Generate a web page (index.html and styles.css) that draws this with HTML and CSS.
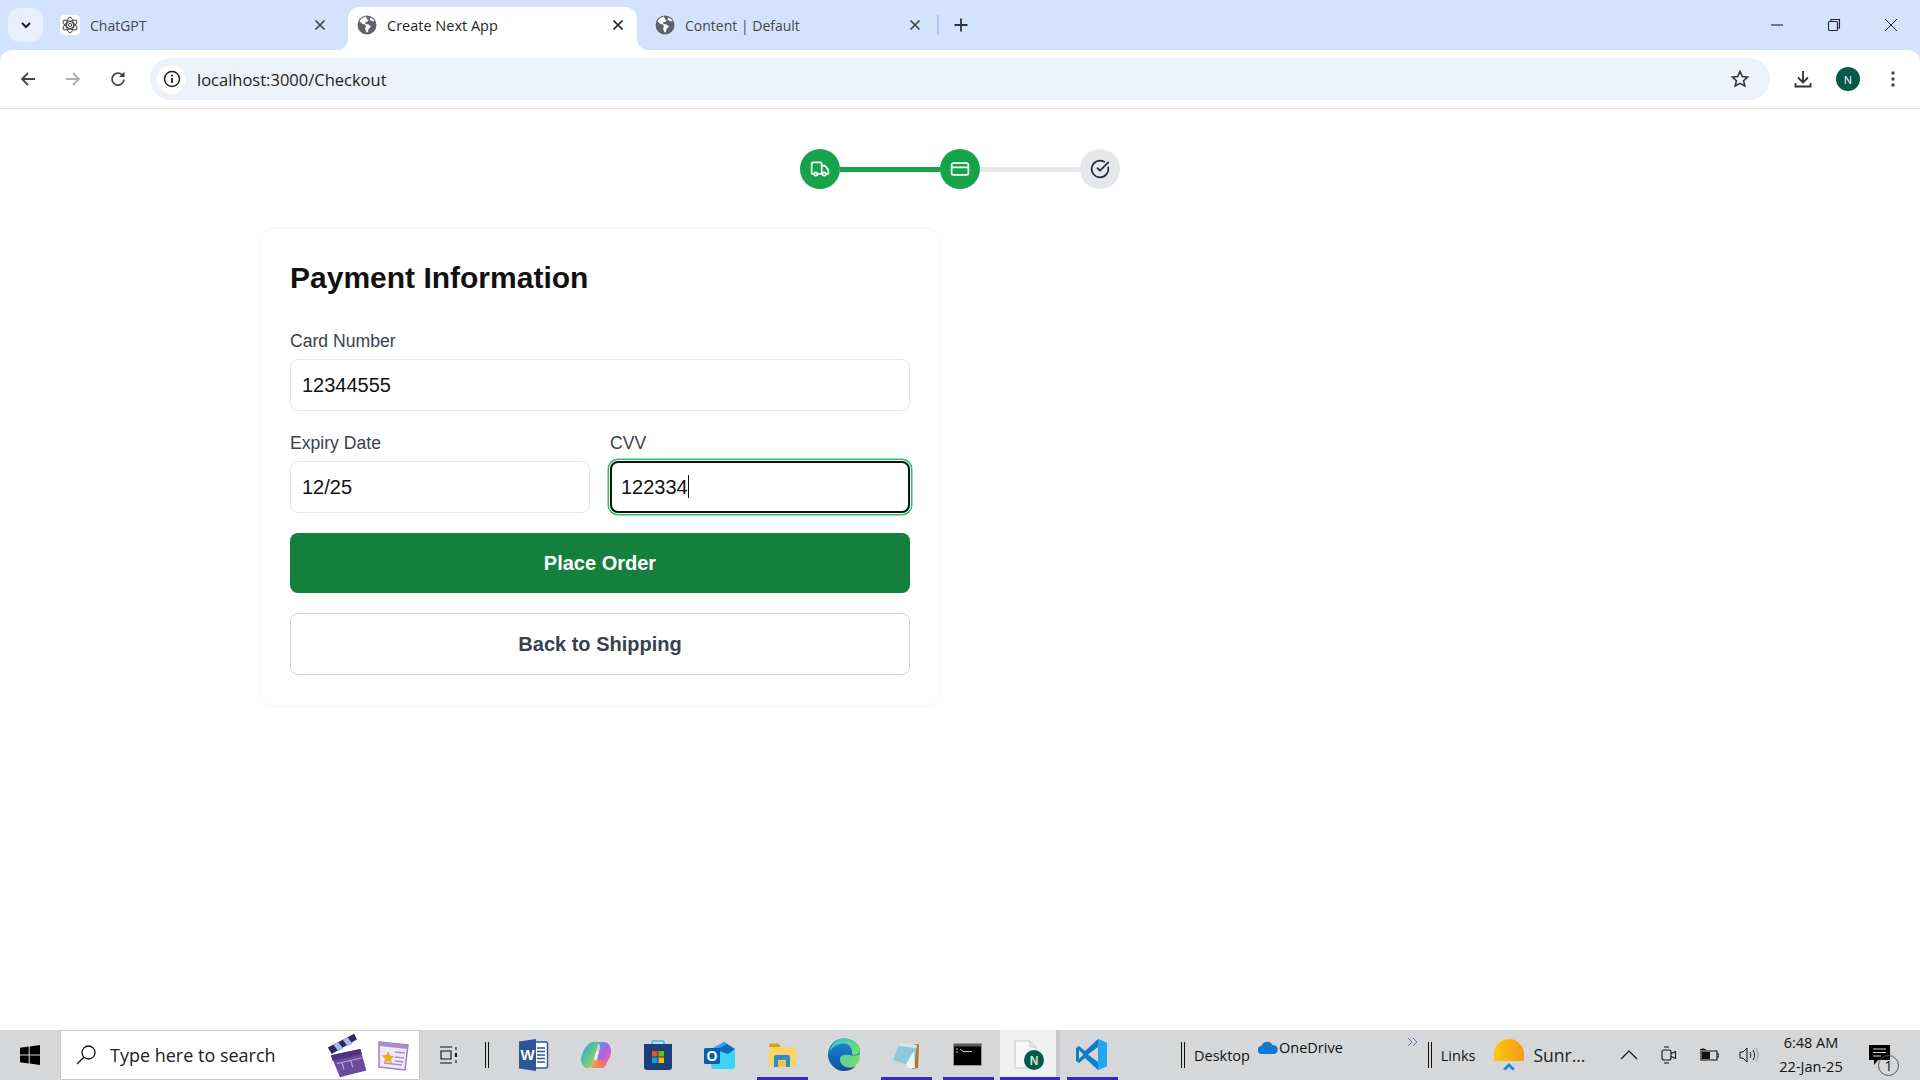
FILE: index.html
```html
<!DOCTYPE html>
<html lang="en">
<head>
<meta charset="utf-8">
<title>Create Next App</title>
<link rel="stylesheet" href="styles.css">
</head>
<body>
<div class="screen">
  <header class="browser">
    <div class="tabstrip">
      <button class="tab-search"><svg width="14" height="14" viewBox="0 0 14 14"><path d="M3 5l4 4 4-4" fill="none" stroke="#1f1f1f" stroke-width="2"/></svg></button>
      <div class="tab tab-first">
        <span class="favicon favicon-gpt"><svg width="18" height="18" viewBox="0 0 18 18" fill="none" stroke="#444" stroke-width="1"><ellipse cx="9" cy="9" rx="3.4" ry="7.8"/><ellipse cx="9" cy="9" rx="3.4" ry="7.8" transform="rotate(60 9 9)"/><ellipse cx="9" cy="9" rx="3.4" ry="7.8" transform="rotate(120 9 9)"/><circle cx="9" cy="9" r="1.6"/></svg></span>
        <span class="tab-title">ChatGPT</span>
        <svg class="tab-close" width="16" height="16" viewBox="0 0 16 16"><path d="M3.5 3.5l9 9M12.5 3.5l-9 9" stroke="#444" stroke-width="1.7"/></svg>
      </div>
      <div class="tab tab-active">
        <svg class="globe" width="20" height="20" viewBox="0 0 20 20"><circle cx="10" cy="10" r="9.5" fill="#5f6368"/><path d="M9 1.5C6 2 3.5 4 2.5 6.5l3 2.5 2.5.5 1 2-1 2 1.5 4 1.5-.5.5-3 2.5-2.5-2.5-2-3-.5-.5-1.5 2-.5 1.5-1.5-1.5-1.500zM13.500 2.500l-1 2 2 1.500 3 .5c-.7-1.800-2.200-3.200-4-4z" fill="#fff"/></svg>
        <span class="tab-title tab-title-active">Create Next App</span>
        <svg class="tab-close" width="16" height="16" viewBox="0 0 16 16"><path d="M3.5 3.5l9 9M12.5 3.5l-9 9" stroke="#1f1f1f" stroke-width="1.7"/></svg>
      </div>
      <div class="tab tab-last">
        <svg class="globe" width="20" height="20" viewBox="0 0 20 20"><circle cx="10" cy="10" r="9.5" fill="#5f6368"/><path d="M9 1.5C6 2 3.5 4 2.5 6.5l3 2.5 2.5.5 1 2-1 2 1.5 4 1.5-.5.5-3 2.5-2.5-2.5-2-3-.5-.5-1.5 2-.5 1.5-1.5-1.5-1.500zM13.500 2.500l-1 2 2 1.500 3 .5c-.7-1.800-2.200-3.200-4-4z" fill="#fff"/></svg>
        <span class="tab-title">Content | Default</span>
        <svg class="tab-close" width="16" height="16" viewBox="0 0 16 16"><path d="M3.5 3.5l9 9M12.5 3.5l-9 9" stroke="#444" stroke-width="1.7"/></svg>
      </div>
      <span class="tab-sep"></span>
      <svg class="tab-new" width="16" height="16" viewBox="0 0 16 16"><path d="M8 1.5v13M1.5 8h13" stroke="#333" stroke-width="1.8"/></svg>
      <div class="window-controls">
        <svg width="14" height="14" viewBox="0 0 14 14"><path d="M1 7h12" stroke="#222" stroke-width="1.1"/></svg>
        <svg width="14" height="14" viewBox="0 0 14 14" fill="none" stroke="#222" stroke-width="1.1"><rect x="1.5" y="3.5" width="9" height="9" rx="1"/><path d="M4 3V1.500h8.500V10H11"/></svg>
        <svg width="14" height="14" viewBox="0 0 14 14"><path d="M1 1l12 12M13 1L1 13" stroke="#222" stroke-width="1"/></svg>
      </div>
    </div>
    <div class="toolbar">
      <svg class="nav-icon" width="18" height="18" viewBox="0 0 18 18" fill="none" stroke="#444" stroke-width="1.8"><path d="M16 9H3M9 3L3 9l6 6"/></svg>
      <svg class="nav-icon" width="18" height="18" viewBox="0 0 18 18" fill="none" stroke="#b0b0b0" stroke-width="1.8"><path d="M2 9h13M9 3l6 6-6 6"/></svg>
      <svg class="nav-icon" width="18" height="18" viewBox="0 0 18 18" fill="none" stroke="#444" stroke-width="1.8"><path d="M15 9.500A6 6 0 1 1 13.200 4.800L15 6.500"/><path d="M15.500 1.500V7H10" fill="#444" stroke="none"/></svg>
      <div class="omnibox">
        <span class="site-info"><svg width="18" height="18" viewBox="0 0 18 18" fill="none"><circle cx="9" cy="9" r="7.5" stroke="#222" stroke-width="1.5"/><path d="M9 8v5" stroke="#222" stroke-width="1.8"/><circle cx="9" cy="5.5" r="1.1" fill="#222"/></svg></span>
        <span class="url">localhost:3000/Checkout</span>
        <svg class="star" width="20" height="20" viewBox="0 0 20 20" fill="none" stroke="#333" stroke-width="1.6"><path d="M10 2.500l2.300 5 5.300.6-4 3.600 1.200 5.300L10 14.300 5.200 17l1.200-5.300-4-3.600 5.300-.6z"/></svg>
      </div>
      <svg class="download" width="20" height="20" viewBox="0 0 20 20" fill="none" stroke="#333" stroke-width="1.8"><path d="M10 2v11M5 8.500l5 5 5-5M2.500 14v3.500h15V14"/></svg>
      <span class="avatar">N</span>
      <svg class="kebab" width="16" height="20" viewBox="0 0 16 20" fill="#444"><circle cx="8" cy="4" r="1.7"/><circle cx="8" cy="10" r="1.7"/><circle cx="8" cy="16" r="1.7"/></svg>
    </div>
  </header>

  <main class="page">
    <div class="container">
      <div class="stepper">
        <span class="step step-done"><svg width="20" height="20" viewBox="0 0 24 24" fill="none" stroke="currentColor" stroke-width="2" stroke-linecap="round" stroke-linejoin="round"><path d="M14 18V6a2 2 0 0 0-2-2H4a2 2 0 0 0-2 2v11a1 1 0 0 0 1 1h2"/><path d="M15 18H9"/><path d="M19 18h2a1 1 0 0 0 1-1v-3.650a1 1 0 0 0-.22-.624l-3.480-4.350A1 1 0 0 0 17.520 8H14"/><circle cx="17" cy="18" r="2"/><circle cx="7" cy="18" r="2"/></svg></span>
        <span class="step-line step-line-done"></span>
        <span class="step step-done"><svg width="20" height="20" viewBox="0 0 24 24" fill="none" stroke="currentColor" stroke-width="2" stroke-linecap="round" stroke-linejoin="round"><rect width="20" height="14" x="2" y="5" rx="2"/><line x1="2" x2="22" y1="10" y2="10"/></svg></span>
        <span class="step-line"></span>
        <span class="step"><svg width="20" height="20" viewBox="0 0 24 24" fill="none" stroke="currentColor" stroke-width="2" stroke-linecap="round" stroke-linejoin="round"><path d="M21.801 10A10 10 0 1 1 17 3.335"/><path d="m9 11 3 3L22 4"/></svg></span>
      </div>

      <section class="card">
        <h2 class="card-title">Payment Information</h2>
        <div class="field">
          <label class="label">Card Number</label>
          <div class="input">12344555</div>
        </div>
        <div class="field-row">
          <div class="field">
            <label class="label">Expiry Date</label>
            <div class="input">12/25</div>
          </div>
          <div class="field">
            <label class="label">CVV</label>
            <div class="input input-focus">122334<span class="caret"></span></div>
          </div>
        </div>
        <button class="btn btn-primary">Place Order</button>
        <button class="btn btn-outline">Back to Shipping</button>
      </section>
    </div>
  </main>

  <footer class="taskbar">
    <div class="start"><svg width="20" height="20" viewBox="0 0 20 20" fill="#000"><path d="M0 2.800l8.700-1.200v7.900H0zM9.700 1.400L20 0v9.500H9.700zM0 10.500h8.700v7.900L0 17.200zM9.700 10.500H20V20L9.700 18.600z"/></svg></div>
    <div class="search">
      <svg width="22" height="22" viewBox="0 0 22 22" fill="none" stroke="#111" stroke-width="1.3"><circle cx="13.500" cy="8.500" r="6.500"/><path d="M8.800 13.200L2 20"/></svg>
      <span class="search-text">Type here to search</span>
      <span class="search-deco">
        <svg class="clapper" width="38" height="42" viewBox="0 0 38 42"><g transform="rotate(-8 19 21)"><path d="M3 19l30-2 3 22-27 3z" fill="#6a4b9e"/><path d="M3 19l30-2 1 5-30 3z" fill="#4f3380"/><path d="M8 28l25-2M13 28l1 7M22 27l1 7" stroke="#b9a6d8" stroke-width="1.2" fill="none"/><path d="M1 11L29 1l2 6L4 18z" fill="#2e2a5a"/><path d="M7 9l5-2 4 7-5 2zM17 5.500l5-2 4 7-5 2z" fill="#a9b8ee"/></g></svg>
        <svg width="34" height="32" viewBox="0 0 34 32"><path d="M3 3l29 3-3 25-26-3z" fill="#efe8f8" stroke="#9b83c6" stroke-width="1.5"/><path d="M3 3l29 3-.5 4L3 7z" fill="#a68fd0"/><path d="M19 13l10 1M19 18l9 1M19 22l8 1M8 24l18 2" stroke="#a68fd0" stroke-width="1.4"/><path d="M12 12l2 4.500 4.500.5-3.500 3 1 4.500-4-2.500-4 2 1-4.500-3-3 4.500-.5z" fill="#f4a81e"/></svg>
      </span>
    </div>
    <div class="task-view"><svg width="20" height="20" viewBox="0 0 20 20" fill="none" stroke="#111" stroke-width="1.1"><path d="M1 2h12M1 18h12M2 6h10v8H2z"/><path d="M17 2v3M17 15v3" /><path d="M17 8v4" stroke-width="2"/></svg></div>
    <span class="dbl-sep"></span>
    <div class="apps">
      <div class="app"><svg width="30" height="32" viewBox="0 0 30 32"><path d="M9 3h18a1.500 1.500 0 0 1 1.500 1.500v23A1.500 1.500 0 0 1 27 29H9z" fill="#fff" stroke="#2b579a" stroke-width="1.5"/><path d="M18 9h8M18 12.500h8M18 16h8M18 19.500h8M18 23h8" stroke="#2b579a" stroke-width="1.5"/><path d="M0 2.500L17 0v32L0 29.500z" fill="#2b579a"/><text x="8.5" y="20.5" class="icon-text icon-text-w">W</text></svg></div>
      <div class="app"><svg width="30" height="28" viewBox="0 0 30 28"><defs><linearGradient id="cp1" x1="0" y1="0" x2="1" y2="1"><stop offset="0" stop-color="#2b9fe8"/><stop offset=".5" stop-color="#5fc88a"/><stop offset="1" stop-color="#f2c53c"/></linearGradient><linearGradient id="cp2" x1="0" y1="0" x2="1" y2="1"><stop offset="0" stop-color="#3bb4ee"/><stop offset=".5" stop-color="#b05fdc"/><stop offset="1" stop-color="#ef6aa5"/></linearGradient><linearGradient id="cp3" x1="0" y1="0" x2="1" y2="0"><stop offset="0" stop-color="#f2a93c"/><stop offset="1" stop-color="#ee5f7f"/></linearGradient></defs><path d="M11 1h7L13 17l-2 7c-1 2-2 3-5 3C2 27 0 22 0 18 1 11 5 3 11 1z" fill="url(#cp1)"/><path d="M17 1h6c4 0 7 4 7 9 0 6-3 12-8 13l-7-1 2-8 2-7c0-3-1-5-2-6z" fill="url(#cp2)"/><path d="M9 27h11c3 0 5-2 6-6l-3-1-10-2-2 6c0 1-1 3-2 3z" fill="url(#cp3)"/><path d="M15 11l3-1-2 9-3 1z" fill="#fff" opacity=".7"/></svg></div>
      <div class="app"><svg width="30" height="30" viewBox="0 0 30 30"><path d="M9 5V2a1 1 0 0 1 1-1h10a1 1 0 0 1 1 1v3" fill="none" stroke="#35c0ee" stroke-width="1.6"/><path d="M1 4h28v23a3 3 0 0 1-3 3H4a3 3 0 0 1-3-3z" fill="#1b3f78"/><rect x="9" y="11" width="5.5" height="5.5" fill="#f25022"/><rect x="15.5" y="11" width="5.5" height="5.5" fill="#7fba00"/><rect x="9" y="17.5" width="5.5" height="5.5" fill="#00a4ef"/><rect x="15.5" y="17.5" width="5.5" height="5.5" fill="#ffb900"/></svg></div>
      <div class="app"><svg width="31" height="28" viewBox="0 0 31 28"><path d="M7 8l13-7 11 7v17a3 3 0 0 1-3 3H10a3 3 0 0 1-3-3z" fill="#3dd3f5"/><path d="M10 8l10-7 11 7-7 5z" fill="#0f6cbd"/><path d="M7 8l13-7 3 2-13 7z" fill="#28a8ea"/><rect x="0" y="7" width="16" height="16" rx="1.5" fill="#0a5db5"/><text x="8" y="20" class="icon-text icon-text-o">O</text></svg></div>
      <div class="app"><svg width="28" height="24" viewBox="0 0 28 24"><path d="M1 2a1.500 1.500 0 0 1 1.500-1.500h8L13 4v3H1z" fill="#d99e1c"/><path d="M1 4h26a1 1 0 0 1 1 1v17.500a1 1 0 0 1-1 1H2a1 1 0 0 1-1-1z" fill="#fbd467"/><path d="M6 24V14a2 2 0 0 1 2-2h12a2 2 0 0 1 2 2v10h-4v-7H10v7z" fill="#2c8dc9"/><rect x="10" y="18" width="8" height="6" fill="#fbc33b"/></svg></div>
      <div class="app"><svg width="32" height="33" viewBox="0 0 32 33"><defs><linearGradient id="edg" x1="0" y1="0" x2="1" y2="1"><stop offset="0" stop-color="#38c6d9"/><stop offset="1" stop-color="#7adf58"/></linearGradient><linearGradient id="edb" x1="0" y1="0" x2="0" y2="1"><stop offset="0" stop-color="#1a8ed6"/><stop offset="1" stop-color="#0f4f9e"/></linearGradient></defs><circle cx="16" cy="16.500" r="16" fill="url(#edg)"/><path d="M16 .5C7 .5 0 8 0 17c0 8 7 16 16 16 5 0 9-2 12-5-5 3-16 2-16-7 0-4 5-5 9-4 5 1 11 1 11-3C32 6 25 .5 16 .5z" fill="url(#edb)"/><path d="M16 .5c8 0 15 5 16 12 0 3-3 5-8 4 1-6-3-11-8-11-6 0-12 3-15 9C3 7 9 .5 16 .5z" fill="url(#edg)"/></svg></div>
      <div class="app"><svg width="28" height="28" viewBox="0 0 28 28"><path d="M27 3l-1 24-6 1 2-25z" fill="#a9783a"/><path d="M8 2l17 2-3 22L1 19z" fill="#8ec8dc"/><path d="M8 2l17 2-.5 3L7 5z" fill="#dfe6e8"/><path d="M14 23l8-13 1 17-7 0z" fill="#eef3f5"/></svg></div>
      <div class="app"><svg width="29" height="23" viewBox="0 0 29 23"><rect x=".5" y=".5" width="28" height="22" rx="1" fill="#000" stroke="#9a9a9a"/><rect x="1" y="1" width="27" height="2.5" fill="#5a5a5a"/><path d="M3 6h2M3 9h2M7 6l3 2.500H19" stroke="#ccc" stroke-width="1" fill="none"/></svg></div>
      <div class="app app-active"><svg width="30" height="30" viewBox="0 0 30 30"><path d="M1 1h15l6 6v21H1z" fill="#f7f7f7" stroke="#c9c9c9"/><path d="M16 1v6h6" fill="#e4e4e4" stroke="#c9c9c9"/><circle cx="20" cy="20" r="10" fill="#03594a"/><text x="20" y="24.5" class="icon-text icon-text-n">N</text></svg></div>
      <div class="app"><svg width="31" height="31" viewBox="0 0 31 31"><path d="M22 0l9 4v23l-9 4L9 19l-6 5-3-2V9l3-2 6 5z" fill="#0f7cc8"/><path d="M22 0l9 4v23l-9 4z" fill="#23a6f0"/><path d="M22 8v15l-10-7.500z" fill="#d5d7d9"/><path d="M3 11v9l4.500-4.500z" fill="#d5d7d9"/></svg></div>
    </div>
    <span class="dbl-sep dbl-sep-desktop"></span>
    <span class="tb-text tb-desktop">Desktop</span>
    <svg class="onedrive" width="20" height="14" viewBox="0 0 20 14"><path d="M4 13a4 4 0 0 1-.5-8A6 6 0 0 1 14.500 4 4.500 4.500 0 0 1 16 13z" fill="#0f78d4"/></svg>
    <span class="tb-text tb-onedrive">OneDrive</span>
    <svg class="chevrons" width="11" height="10" viewBox="0 0 11 10" fill="none" stroke="#6a6fa8" stroke-width="1"><path d="M1 1l4 4-4 4M6 1l4 4-4 4"/></svg>
    <span class="dbl-sep dbl-sep-links"></span>
    <span class="tb-text tb-links">Links</span>
    <svg class="sunrise" width="30" height="32" viewBox="0 0 30 32"><defs><linearGradient id="sun" x1="0" y1="0" x2="1" y2="0"><stop offset="0" stop-color="#fbc80e"/><stop offset="1" stop-color="#f79a16"/></linearGradient></defs><path d="M0 22V15a15 15 0 0 1 30 0v7z" fill="url(#sun)"/><path d="M9 30l6-6 6 6-2.500 1.500L15 28l-3.500 3.500z" fill="#1a8ad8"/></svg>
    <span class="tb-text tb-weather">Sunr...</span>
    <div class="tray">
      <span class="tray-cell"><svg width="18" height="10" viewBox="0 0 18 10" fill="none" stroke="#111" stroke-width="1.2"><path d="M1 9l8-8 8 8"/></svg></span>
      <span class="tray-cell"><svg width="16" height="20" viewBox="0 0 16 20" fill="none" stroke="#111" stroke-width="1.1"><rect x="1" y="5" width="9" height="10" rx="2"/><path d="M10 8.500l4.500-2v7l-4.500-2M3 2h5M3 18h5"/></svg></span>
      <span class="tray-cell"><svg width="20" height="14" viewBox="0 0 20 14"><path d="M2 3h16v9H2zM18 6h2v3h-2zM4 0v2M1 1.500h6" fill="none" stroke="#111" stroke-width="1.1"/><rect x="3" y="4" width="8" height="7" fill="#111"/></svg></span>
      <span class="tray-cell"><svg width="20" height="18" viewBox="0 0 20 18" fill="none" stroke="#111" stroke-width="1"><path d="M1 6h3l4-4v14l-4-4H1z"/><path d="M11 6c1 2 1 4 0 6M14 4c2 3 2 7 0 10"/><path d="M17 2c2.500 4 2.500 10 0 14" stroke="#999"/></svg></span>
    </div>
    <div class="clock"><span>6:48 AM</span><span>22-Jan-25</span></div>
    <div class="notify">
      <svg width="21" height="20" viewBox="0 0 21 20"><path d="M0 0h21v15H9l-4 5v-5H0z" fill="#000"/><path d="M4 4h13M4 7.500h13M4 11h8" stroke="#d5d7d9" stroke-width="1.2"/></svg>
      <span class="notify-count">1</span>
    </div>
  </footer>
</div>
</body>
</html>
```
FILE: styles.css
```css
* { box-sizing: border-box; }
html, body { margin: 0; height: 100%; background: #fff; }
body { font-family: "Liberation Sans", Arial, sans-serif; overflow: hidden; }
svg { display: block; flex: none; }
button { font: inherit; border: 0; padding: 0; }

.screen { width: 1920px; height: 1080px; display: flex; flex-direction: column; }

/* browser chrome */
.browser { height: 109px; flex: none; background: #d3e3fd; font-family: "Open Sans", sans-serif; }
.tabstrip { height: 50px; display: flex; align-items: flex-end; }
.tab-search { width: 35px; height: 34px; margin: 0 5px 8px 8px; border-radius: 12px; background: #e9f0fd; display: flex; align-items: center; justify-content: center; }
.tab { height: 43px; display: flex; align-items: center; position: relative; }
.tab-first { width: 298px; padding: 0 18px 7px 12px; }
.tab-active { width: 289px; margin: 0 7px 0 2px; padding: 0 11px 7px 9px; background: #fff; border-radius: 12px 12px 0 0; }
.tab-active::before, .tab-active::after { content: ""; position: absolute; bottom: 0; width: 12px; height: 12px; }
.tab-active::before { left: -12px; background: radial-gradient(circle at 0 0, transparent 12px, #fff 12.5px); }
.tab-active::after { right: -12px; background: radial-gradient(circle at 100% 0, transparent 12px, #fff 12.5px); }
.tab-last { width: 298px; padding: 0 19px 7px 11px; }
.favicon-gpt { width: 20px; height: 20px; background: #fff; border-radius: 4px; display: flex; align-items: center; justify-content: center; }
.tab-title { flex: 1; margin-left: 10px; font-size: 14px; color: #474747; white-space: nowrap; }
.tab-title-active { color: #1f1f1f; font-size: 14.5px; }
.tab-sep { width: 2px; height: 20px; background: #a8c7fa; margin: 0 0 15px -5px; }
.tab-new { margin: 0 0 17px 14px; }
.window-controls { margin-left: auto; display: flex; gap: 43px; padding: 0 22px 18px 0; }

.toolbar { height: 59px; background: #fff; border-radius: 12px 12px 0 0; border-bottom: 1px solid #e3e2dc; display: flex; align-items: center; padding: 0 18px 0 19px; }
.nav-icon { margin-right: 27px; }
.nav-icon:nth-child(3) { margin-right: 0; }
.omnibox { width: 1620px; height: 42px; margin-left: 23px; border-radius: 21px; background: #ecf1fa; display: flex; align-items: center; padding: 0 20px 0 7px; }
.site-info { width: 29px; height: 29px; border-radius: 50%; background: #fff; display: flex; align-items: center; justify-content: center; }
.url { flex: 1; margin-left: 11px; font-size: 16.5px; color: #1f1f1f; }
.download { margin-left: 23px; }
.avatar { width: 24px; height: 24px; margin-left: 23px; border-radius: 50%; background: #03594a; color: #fff; font-size: 11px; display: flex; align-items: center; justify-content: center; }
.kebab { margin-left: 25px; }

/* page */
.page { flex: 1; }
.container { width: 1400px; margin: 0 auto; padding-top: 40px; }
.stepper { display: flex; align-items: center; justify-content: center; margin-bottom: 39px; }
.step { width: 40px; height: 40px; border-radius: 50%; background: #e5e7eb; color: #1f2937; display: flex; align-items: center; justify-content: center; }
.step-done { background: #16a34a; color: #fff; }
.step-line { width: 100px; height: 5px; background: #e5e7eb; }
.step-line-done { background: #16a34a; }

.card { width: 680px; padding: 31px 29px 30px; border: 1px solid #f7f7f8; border-radius: 12px; background: #fff; box-shadow: 0 1px 2px rgba(0, 0, 0, .02); }
.card-title { margin: 0 0 33px; font-size: 30px; line-height: 36px; font-weight: 700; color: #111; }
.field { display: block; margin-bottom: 20px; }
.field-row { display: grid; grid-template-columns: 1fr 1fr; gap: 20px; }
.label { display: block; margin-bottom: 6px; font-size: 17.6px; line-height: 24px; color: #374151; }
.input { height: 52px; padding: 0 11px; border: 1px solid #e5e7eb; border-radius: 8px; font-size: 20px; line-height: 50px; color: #111; background: #fff; }
.input-focus { border: 2px solid #111; padding: 0 9px; line-height: 48px; box-shadow: 0 0 0 1px #fff, 0 0 0 2.5px #22c55e; }
.caret { display: inline-block; width: 1px; height: 23px; background: #111; vertical-align: -4px; }
.btn { display: block; width: 100%; border-radius: 8px; font-size: 20px; font-weight: 700; text-align: center; }
.btn-primary { height: 60px; background: #15803d; color: #fff; margin-bottom: 20px; }
.btn-outline { height: 62px; background: #fff; color: #374151; border: 1px solid #d1d5db; }

/* taskbar */
.taskbar { height: 50px; flex: none; background: #d5d7d9; display: flex; align-items: center; font-family: "Open Sans", sans-serif; color: #111; }
.start { width: 60px; display: flex; justify-content: center; }
.search { width: 360px; height: 50px; background: #fff; border: 1px solid #c9cbcd; display: flex; align-items: center; padding: 0 9px 0 14px; }
.search-text { flex: 1; margin-left: 13px; font-size: 18px; color: #222; }
.search-deco { display: flex; align-items: center; gap: 10px; }
.clapper { overflow: visible; }
.task-view { width: 58px; display: flex; justify-content: center; }
.dbl-sep { width: 4px; height: 26px; border-left: 1px solid #111; border-right: 1px solid #111; margin-left: 7px; flex: none; }
.apps { display: flex; gap: 11px; margin-left: 20px; height: 50px; }
.app { width: 51px; height: 50px; border-bottom: 3px solid #3b22cf; display: flex; align-items: center; justify-content: center; padding: 2px 2px 0 0; }
.app:nth-child(-n+4), .app:nth-child(6) { border-bottom-color: transparent; }
.app-active { width: 60px; margin: 0 -4px 0 -5px; background: #f0f0f0; box-shadow: inset -4px 0 0 #c9c9cc; }
.icon-text { font-family: "Liberation Sans", sans-serif; font-weight: 700; text-anchor: middle; fill: #fff; }
.icon-text-w { font-size: 15px; }
.icon-text-o { font-size: 14px; }
.icon-text-n { font-size: 12px; fill: #cfe3dc; }
.dbl-sep-desktop { margin-left: 63px; }
.tb-text { font-size: 14.5px; white-space: nowrap; }
.tb-desktop { margin-left: 9px; }
.onedrive { margin: -15px 0 0 8px; }
.tb-onedrive { margin: -15px 0 0 1px; }
.chevrons { margin: -26px 0 0 64px; }
.dbl-sep-links { margin-left: 10px; }
.tb-links { margin-left: 9px; }
.sunrise { margin: 0 0 0 19px; }
.tb-weather { margin-left: 9px; font-size: 17.5px; color: #222; }
.tray { display: flex; align-items: center; margin-left: auto; }
.tray-cell { width: 40px; display: flex; justify-content: center; }
.clock { width: 84px; display: flex; flex-direction: column; align-items: center; font-size: 14.5px; line-height: 24px; }
.notify { position: relative; width: 67px; height: 40px; padding: 10px 0 0 16px; }
.notify-count { position: absolute; left: 25px; top: 20px; width: 21px; height: 21px; border-radius: 50%; border: 1px solid #555; font-size: 14px; line-height: 20px; text-align: center; }
```
